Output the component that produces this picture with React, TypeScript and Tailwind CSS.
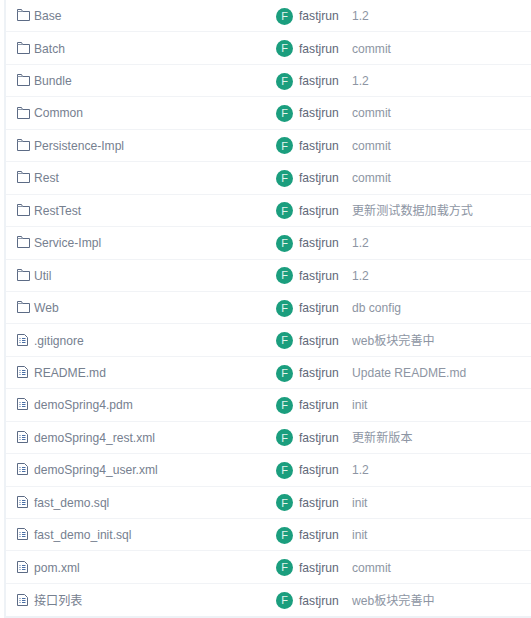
const rows: { name: string; kind: 'dir' | 'file'; msg: string }[] = [
  { name: 'Base', kind: 'dir', msg: '1.2' },
  { name: 'Batch', kind: 'dir', msg: 'commit' },
  { name: 'Bundle', kind: 'dir', msg: '1.2' },
  { name: 'Common', kind: 'dir', msg: 'commit' },
  { name: 'Persistence-Impl', kind: 'dir', msg: 'commit' },
  { name: 'Rest', kind: 'dir', msg: 'commit' },
  { name: 'RestTest', kind: 'dir', msg: '更新测试数据加载方式' },
  { name: 'Service-Impl', kind: 'dir', msg: '1.2' },
  { name: 'Util', kind: 'dir', msg: '1.2' },
  { name: 'Web', kind: 'dir', msg: 'db config' },
  { name: '.gitignore', kind: 'file', msg: 'web板块完善中' },
  { name: 'README.md', kind: 'file', msg: 'Update README.md' },
  { name: 'demoSpring4.pdm', kind: 'file', msg: 'init' },
  { name: 'demoSpring4_rest.xml', kind: 'file', msg: '更新新版本' },
  { name: 'demoSpring4_user.xml', kind: 'file', msg: '1.2' },
  { name: 'fast_demo.sql', kind: 'file', msg: 'init' },
  { name: 'fast_demo_init.sql', kind: 'file', msg: 'init' },
  { name: 'pom.xml', kind: 'file', msg: 'commit' },
  { name: '接口列表', kind: 'file', msg: 'web板块完善中' },
]

function FolderIcon() {
  return (
    <svg width="13" height="12" viewBox="0 0 13 12" fill="none" stroke="#5c6b85" strokeWidth="1" className="shrink-0 mb-[2px] mr-[1px]">
      <path d="M0.5 11.5V0.5H4.5L5.5 2.5H12.5V11.5Z" />
      <path d="M0.5 2.5H5.5" stroke="#8a96a8" />
    </svg>
  )
}

function FileIcon() {
  return (
    <svg width="11" height="12" viewBox="0 0 11 12" fill="none" stroke="#5c6b85" strokeWidth="1" className="shrink-0 mb-[2px] mr-[3px]">
      <path d="M0.5 0.5H7.5L10.5 3.5V11.5H0.5Z" />
      <path d="M2.5 4.5H3.5M5 4.5H8.5M2.5 6.5H3.5M5 6.5H8.5M2.5 8.5H3.5M5 8.5H8.5" stroke="#4a6fa5" />
    </svg>
  )
}

export default function App() {
  return (
    <div className="w-[531px] h-[618px] overflow-hidden bg-white font-['Liberation_Sans','Noto_Sans_CJK_SC',sans-serif]">
      <div className="ml-[4px] h-[618px] flex flex-col bg-white border-l-2 border-b-2 border-[#eef2f6]">
        {rows.map((r) => (
          <div key={r.name} className="h-[32.44px] pt-px shrink-0 flex items-center border-b border-[#f1f3f6] last:border-b-0 text-[12.1px]">
            <div className="w-[270px] pl-[11px] flex items-center gap-[3px] shrink-0">
              {r.kind === 'dir' ? <FolderIcon /> : <FileIcon />}
              <span className="text-[#76808f]">{r.name}</span>
            </div>
            <div className="w-[17px] h-[17px] rounded-full bg-[#1b9e7e] text-[#e4f4ef] text-[11px] flex items-center justify-center shrink-0">F</div>
            <span className="ml-[6px] w-[53px] shrink-0 text-[#5f6878]">fastjrun</span>
            <span className="text-[#8d95a3]">{r.msg}</span>
          </div>
        ))}
      </div>
    </div>
  )
}
